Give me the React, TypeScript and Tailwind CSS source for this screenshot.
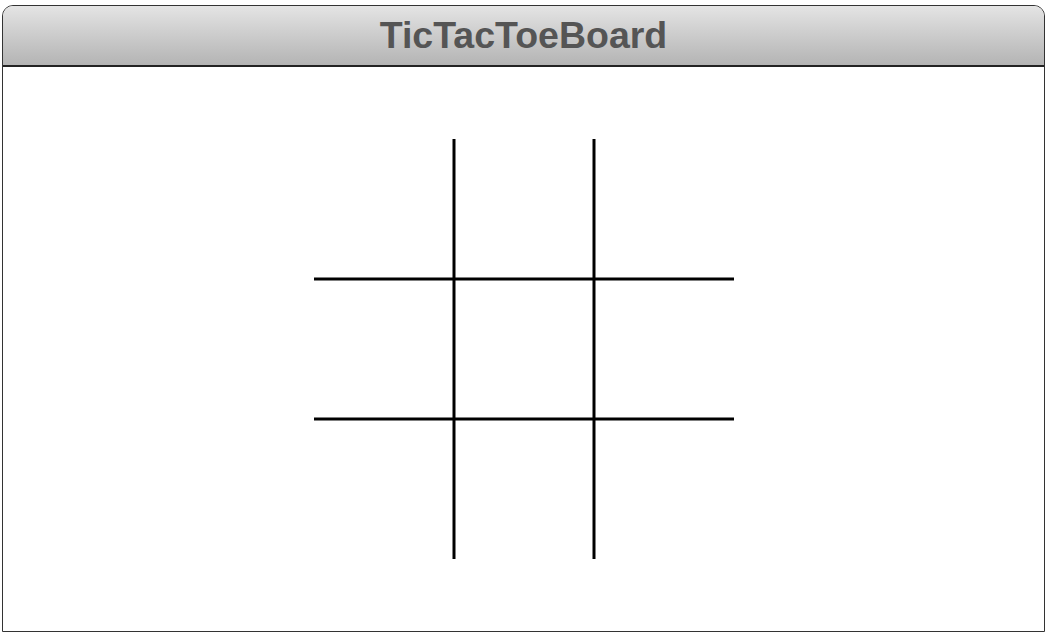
export default function App() {
  return (
    <div className="w-[1050px] h-[633px] bg-white pt-[5px] pl-[2px]">
      <div className="w-[1043px] h-[627px] border border-[#333333] rounded-t-[11px] flex flex-col overflow-hidden">
        <div className="h-[61px] shrink-0 border-b-2 border-b-[#222222] bg-gradient-to-b from-[#e4e4e4] to-[#b4b4b4] flex items-center justify-center">
          <span
            className="text-[37.5px] font-bold text-[#555555] leading-none"
            style={{ fontFamily: '"Liberation Sans", Arial, sans-serif' }}
          >
            TicTacToeBoard
          </span>
        </div>
        <div className="flex-1 bg-white flex items-center justify-center">
          <svg width="420" height="420" viewBox="0 0 420 420">
            <line x1="140" y1="0" x2="140" y2="420" stroke="#000" strokeWidth="3" />
            <line x1="280" y1="0" x2="280" y2="420" stroke="#000" strokeWidth="3" />
            <line x1="0" y1="140" x2="420" y2="140" stroke="#000" strokeWidth="3" />
            <line x1="0" y1="280" x2="420" y2="280" stroke="#000" strokeWidth="3" />
          </svg>
        </div>
      </div>
    </div>
  );
}
